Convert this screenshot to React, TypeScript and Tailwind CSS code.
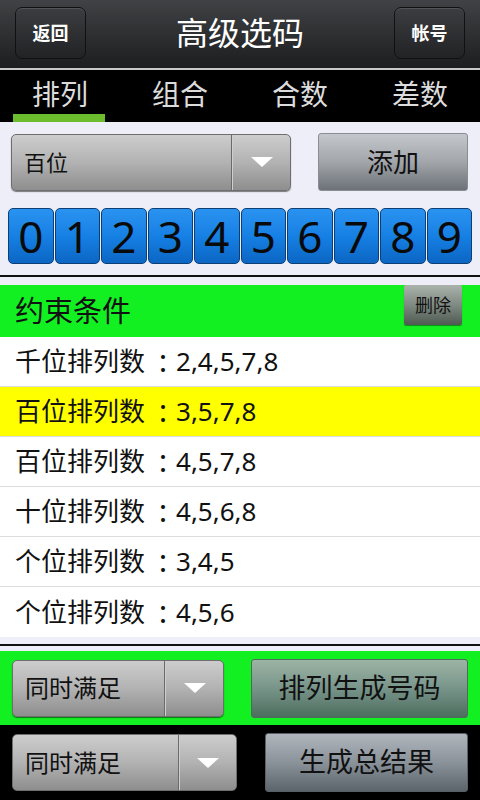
import React from "react";

const FONT = { fontFamily: '"Noto Sans", "Noto Sans CJK SC", sans-serif' };
const TC = { fontFamily: '"Noto Sans CJK TC", sans-serif' };

const rows = [
  { name: "千位排列数", nums: "2,4,5,7,8", hl: false },
  { name: "百位排列数", nums: "3,5,7,8", hl: true },
  { name: "百位排列数", nums: "4,5,7,8", hl: false },
  { name: "十位排列数", nums: "4,5,6,8", hl: false },
  { name: "个位排列数", nums: "3,4,5", hl: false },
  { name: "个位排列数", nums: "4,5,6", hl: false },
];

const tabs = ["排列", "组合", "合数", "差数"];

function Arrow() {
  return (
    <svg width="24" height="12" viewBox="0 0 24 12">
      <path d="M1 1 L23 1 L12 11 Z" fill="#ffffff" />
    </svg>
  );
}

function Spinner({ label, width, split, textSize }: { label: string; width: string; split: string; textSize: string }) {
  return (
    <div className={`flex h-[57px] ${width} rounded-[5px] border border-[#6e6e6e] bg-gradient-to-b from-[#cdcdcd] via-[#b2b2b2] to-[#8e8e8e] shadow-[0_1px_1px_rgba(0,0,0,0.5)]`}>
      <div className={`flex h-full ${split} items-center border-r border-r-[#6a6a6a] pl-3 ${textSize} text-[#111]`}>{label}</div>
      <div className="flex h-full flex-1 items-center justify-center border-l border-l-[#cfcfcf]">
        <Arrow />
      </div>
    </div>
  );
}

function HeaderButton({ label }: { label: string }) {
  return (
    <div className="flex h-[52px] w-[71px] items-center justify-center rounded-[7px] border border-[#111] bg-gradient-to-b from-[#3c3d40] to-[#222325] text-[18px] font-bold text-white shadow-[inset_0_1px_0_rgba(255,255,255,0.12)]">
      {label}
    </div>
  );
}

export default function App() {
  return (
    <div className="flex h-[800px] w-[480px] flex-col overflow-hidden bg-black" style={FONT}>
      {/* title bar */}
      <div className="flex h-[70px] items-center justify-between border-b-2 border-b-[#c9c9c9] bg-gradient-to-b from-[#404245] to-[#1d1e20] px-[15px] pb-[2px]">
        <HeaderButton label="返回" />
        <div className="text-[32px] text-white">高级选码</div>
        <HeaderButton label="帐号" />
      </div>

      {/* tabs */}
      <div className="grid h-[52px] grid-cols-4 bg-black">
        {tabs.map((t, i) => (
          <div key={t} className="relative flex items-center justify-center pb-[4px] text-[28px] text-[#dcdcdc]">
            {t}
            {i === 0 && <div className="absolute bottom-0 left-[13px] h-[8px] w-[92px] bg-[#6cbd2e]" />}
          </div>
        ))}
      </div>

      {/* selectors */}
      <div className="bg-[#eeeef8] px-[8px] pt-[11px]">
        <div className="flex items-center justify-between pl-[3px] pr-[4px]">
          <Spinner label="百位" width="w-[280px]" split="w-[220px]" textSize="text-[22px]" />
          <div className="flex h-[58px] w-[150px] items-center justify-center rounded-[3px] border border-[#8a8e92] bg-gradient-to-b from-[#c4c8cc] via-[#a2a6aa] to-[#6c7278] text-[26px] text-[#111]">
            添加
          </div>
        </div>
        <div className="mt-[17px] flex gap-[1px] pb-[11px]">
          {[0, 1, 2, 3, 4, 5, 6, 7, 8, 9].map((n) => (
            <div
              key={n}
              className="flex h-[56px] flex-1 items-center justify-center rounded-[5px] border border-[#0d3f75] bg-gradient-to-b from-[#2a93f0] via-[#1680e4] to-[#0c66c4] text-[44px] leading-none text-[#0a0a0a]"
            >
              {n}
            </div>
          ))}
        </div>
        <div className="-mx-[8px] h-[2px] bg-[#111]" />
        <div className="-mx-[8px] h-[8px] bg-[#eeeef8]" />
      </div>

      {/* constraints */}
      <div className="flex h-[52px] items-center justify-between bg-[#12f022] pl-[15px] pr-[18px]">
        <div className="text-[29px] text-[#111]">约束条件</div>
        <div className="-mt-[12px] flex h-[40px] w-[58px] items-center justify-center rounded-[2px] bg-gradient-to-b from-[#aab2ac] via-[#7f8a82] to-[#4f5a52] text-[18px] text-[#111] shadow-[0_1px_1px_rgba(0,0,0,0.4)]">
          删除
        </div>
      </div>
      <div className="bg-white">
        {rows.map((r, i) => (
          <div
            key={i}
            className={`flex h-[50px] items-center pl-[15px] text-[26px] text-[#111] ${r.hl ? "bg-[#ffff00]" : "bg-white"} ${i < rows.length - 1 ? "border-b border-b-[#dcdcdc]" : ""}`}
          >
            {r.name}
            <span className="pl-[5px]" style={TC}>：</span>
            {r.nums}
          </div>
        ))}
      </div>
      <div className="h-[7px] bg-[#eeeef8]" />
      <div className="h-[2px] bg-[#111]" />
      <div className="h-[5px] bg-[#eeeef8]" />

      {/* generate */}
      <div className="flex h-[74px] items-center justify-between bg-[#12f022] pl-[12px] pr-[12px]">
        <Spinner label="同时满足" width="w-[212px]" split="w-[152px]" textSize="text-[24px]" />
        <div className="flex h-[59px] w-[217px] items-center justify-center rounded-[3px] border border-[#4e6a5a] bg-gradient-to-b from-[#9cb4a4] via-[#78948a] to-[#4c6e5e] text-[27px] text-[#111]">
          排列生成号码
        </div>
      </div>
      <div className="flex flex-1 items-center justify-between bg-black pl-[12px] pr-[12px]">
        <Spinner label="同时满足" width="w-[225px]" split="w-[166px]" textSize="text-[24px]" />
        <div className="flex h-[59px] w-[203px] items-center justify-center rounded-[3px] border border-[#5a6068] bg-gradient-to-b from-[#b0b6bc] via-[#8a929a] to-[#5c646c] text-[27px] text-[#111]">
          生成总结果
        </div>
      </div>
    </div>
  );
}
